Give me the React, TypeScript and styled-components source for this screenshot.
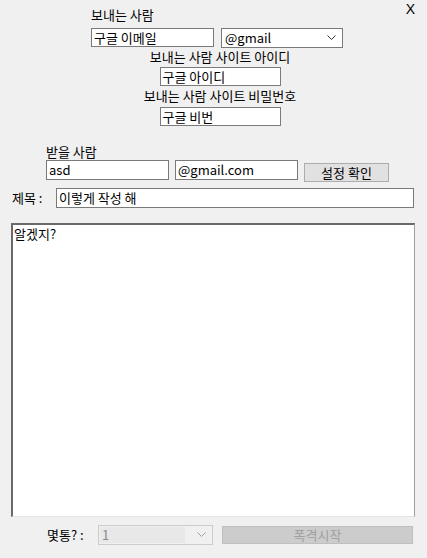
import styled, { createGlobalStyle } from "styled-components";

const GlobalStyle = createGlobalStyle`
  body {
    margin: 0;
    background: #f0f0f0;
    font-family: "Noto Sans CJK KR", "Liberation Sans", sans-serif;
    font-size: 13px;
    color: #000;
  }
  * { box-sizing: border-box; }
`;

const Window = styled.div`
  position: relative;
  width: 427px;
  height: 558px;
  padding-top: 8px;
  display: flex;
  flex-direction: column;
  background: #f0f0f0;
  overflow: hidden;
`;

const CloseButton = styled.div`
  position: absolute;
  top: 1px;
  right: 12px;
  font-size: 14px;
  line-height: 16px;
  font-family: "Liberation Sans", sans-serif;
  cursor: pointer;
`;

const Block = styled.div<{ left?: number; top?: number }>`
  display: flex;
  flex-direction: column;
  padding-left: ${(p) => p.left ?? 0}px;
  margin-top: ${(p) => p.top ?? 0}px;
`;

const CenterBlock = styled.div<{ top?: number }>`
  display: flex;
  flex-direction: column;
  align-items: center;
  width: 200px;
  margin-left: 120px;
  margin-top: ${(p) => p.top ?? 0}px;
`;

const Label = styled.div<{ top?: number }>`
  line-height: 14px;
  height: 14px;
  white-space: nowrap;
  margin-top: ${(p) => p.top ?? 0}px;
`;

const Row = styled.div<{ top?: number; gap?: number }>`
  display: flex;
  align-items: flex-start;
  height: 20px;
  gap: ${(p) => p.gap ?? 7}px;
  margin-top: ${(p) => p.top ?? 0}px;
`;

const TextBox = styled.div<{ width: number; height?: number; top?: number }>`
  flex: none;
  width: ${(p) => p.width}px;
  height: ${(p) => p.height ?? 19}px;
  margin-top: ${(p) => p.top ?? 0}px;
  border: 1px solid #7a7a7a;
  background: #fff;
  padding: 0 2px;
  line-height: 17px;
  white-space: nowrap;
  overflow: hidden;
`;

const Combo = styled.div<{ width: number; disabled?: boolean }>`
  flex: none;
  width: ${(p) => p.width}px;
  height: 20px;
  border: 1px solid ${(p) => (p.disabled ? "#cccccc" : "#7a7a7a")};
  background: ${(p) => (p.disabled ? "#f0f0f0" : "#fff")};
  display: flex;
  align-items: center;
  padding: 1px 6px 1px 1px;
  color: ${(p) => (p.disabled ? "#8a8a8a" : "#000")};
`;

const ComboText = styled.div<{ disabled?: boolean }>`
  flex: 1;
  height: 100%;
  line-height: 16px;
  padding-left: 2px;
  margin-right: 12px;
  background: ${(p) => (p.disabled ? "#e8e8e8" : "transparent")};
`;

const Button = styled.div<{ width: number; height?: number; top?: number; left?: number; disabled?: boolean }>`
  flex: none;
  width: ${(p) => p.width}px;
  height: ${(p) => p.height ?? 19}px;
  margin-top: ${(p) => p.top ?? 0}px;
  margin-left: ${(p) => p.left ?? 0}px;
  background: ${(p) => (p.disabled ? "#cccccc" : "#e1e1e1")};
  border: 1px solid ${(p) => (p.disabled ? "#bfbfbf" : "#adadad")};
  color: ${(p) => (p.disabled ? "#a0a0a0" : "#000")};
  display: flex;
  align-items: center;
  justify-content: center;
  line-height: 14px;
`;

const SubjectRow = styled.div`
  display: flex;
  align-items: center;
  height: 20px;
  margin-top: 8px;
  padding-left: 12px;
`;

const SubjectLabel = styled.div`
  width: 44px;
  line-height: 14px;
  white-space: nowrap;
`;

const Body = styled.div`
  margin: 15px 12px 0 11px;
  height: 294px;
  flex: none;
  background: #fff;
  border-top: 2px solid #6a6a6a;
  border-left: 2px solid #6a6a6a;
  border-right: 1px solid #a0a0a0;
  border-bottom: 1px solid #e3e3e3;
  padding: 1px 1px;
  line-height: 16px;
`;

const BottomRow = styled.div`
  display: flex;
  align-items: flex-start;
  margin-top: 8px;
  padding-left: 47px;
`;

const CountLabel = styled.div`
  width: 51px;
  line-height: 14px;
  margin-top: 3px;
  white-space: nowrap;
`;

const Chevron = ({ color }: { color: string }) => (
  <svg width="9" height="6" viewBox="0 0 9 6">
    <path d="M0.5 0.5 L4.5 4.5 L8.5 0.5" fill="none" stroke={color} strokeWidth="1" />
  </svg>
);

function App() {
  return (
    <Window>
      <GlobalStyle />
      <CloseButton>X</CloseButton>

      <Block left={91}>
        <Label>보내는 사람</Label>
        <Row top={6} gap={7}>
          <TextBox width={123}>구글 이메일</TextBox>
          <Combo width={122}>
            <ComboText>@gmail</ComboText>
            <Chevron color="#333" />
          </Combo>
        </Row>
      </Block>

      <CenterBlock top={2}>
        <Label>보내는 사람 사이트 아이디</Label>
        <TextBox width={121} top={3}>구글 아이디</TextBox>
        <Label top={3}>보내는 사람 사이트 비밀번호</Label>
        <TextBox width={121} top={4}>구글 비번</TextBox>
      </CenterBlock>

      <Block left={46} top={19}>
        <Label>받을 사람</Label>
        <Row top={1} gap={6}>
          <TextBox width={123} height={20}>asd</TextBox>
          <TextBox width={123} height={20}>@gmail.com</TextBox>
          <Button width={85} top={3}>설정 확인</Button>
        </Row>
      </Block>

      <SubjectRow>
        <SubjectLabel>제목 :</SubjectLabel>
        <TextBox width={358} height={20}>이렇게 작성 해</TextBox>
      </SubjectRow>

      <Body>알겠지?</Body>

      <BottomRow>
        <CountLabel>몇통? :</CountLabel>
        <Combo width={115} disabled>
          <ComboText disabled>1</ComboText>
          <Chevron color="#a0a0a0" />
        </Combo>
        <Button width={191} height={18} top={1} left={9} disabled>
          폭격시작
        </Button>
      </BottomRow>
    </Window>
  );
}

export default App;
